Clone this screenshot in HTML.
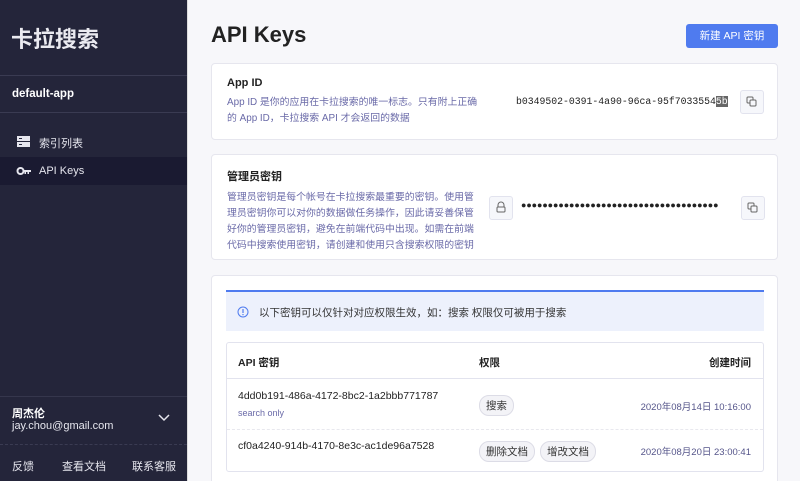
<!DOCTYPE html>
<html><head><meta charset="utf-8"><style>
*{box-sizing:border-box;margin:0;padding:0}
html,body{width:800px;height:481px;overflow:hidden}
body{font-family:"Liberation Sans","Noto Sans CJK SC",sans-serif;background:#f7f7fa;position:relative}
.sb{position:absolute;left:0;top:0;width:187px;height:481px;background:#24253a;color:#e6e6ee}
.a{position:absolute}
.card{position:absolute;background:#fff;border:1px solid #e6e6ee;border-radius:4px}
.ib{position:absolute;width:24px;height:24px;border:1px solid #e2e3ee;border-radius:3px;background:#f6f7fb}
.desc{color:#6a6aa8;font-size:9.9px;line-height:16px;white-space:nowrap}
.tag{display:inline-block;border:1px solid #dcdce6;background:#f3f3f7;border-radius:10px;font-size:10.5px;padding:2px 6px;color:#333;margin-right:5px}
</style></head><body>
<div class="sb">
 <div class="a" style="left:11px;top:22px;font-size:22px;font-weight:bold;color:#eaeaf0">卡拉搜索</div>
 <div class="a" style="left:0;top:75px;width:187px;border-top:1px solid #3a3b52"></div>
 <div class="a" style="left:12px;top:88px;font-size:11.5px;font-weight:bold;color:#fff">default-app</div>
 <div class="a" style="left:0;top:112px;width:187px;border-top:1px solid #3a3b52"></div>
 <svg class="a" style="left:17px;top:136px" width="13" height="11"><rect x="0" y="0" width="13" height="5" fill="#e6e6ee"/><rect x="0" y="6" width="13" height="5" fill="#e6e6ee"/><rect x="2" y="2" width="3" height="1" fill="#24253a"/><rect x="2" y="8" width="3" height="1" fill="#24253a"/></svg>
 <div class="a" style="left:39px;top:135px;font-size:11px">索引列表</div>
 <div class="a" style="left:0;top:157px;width:187px;height:28px;background:#1a1a31"></div>
 <svg class="a" style="left:16px;top:166px" width="16" height="10"><circle cx="4.5" cy="5" r="3" fill="none" stroke="#e6e6ee" stroke-width="2"/><path d="M7 4h8v2h-2v2h-1.5V6H10v2H8.5V6H7z" fill="#e6e6ee"/></svg>
 <div class="a" style="left:39px;top:165px;font-size:11px">API Keys</div>
 <div class="a" style="left:0;top:396px;width:187px;border-top:1px solid #35364c"></div>
 <div class="a" style="left:12px;top:405px;font-size:11px;font-weight:bold;color:#fff">周杰伦</div>
 <div class="a" style="left:12px;top:420px;font-size:11px">jay.chou@gmail.com</div>
 <svg class="a" style="left:158px;top:414px" width="12" height="8"><path d="M1 1l5 5 5-5" fill="none" stroke="#e6e6ee" stroke-width="1.5"/></svg>
 <div class="a" style="left:0;top:444px;width:187px;border-top:1px dashed #3a3b52"></div>
 <div class="a" style="left:12px;top:458px;font-size:11px">反馈</div>
 <div class="a" style="left:62px;top:458px;font-size:11px">查看文档</div>
 <div class="a" style="left:132px;top:458px;font-size:11px">联系客服</div>
</div>
<div class="a" style="left:187px;top:0;width:1px;height:481px;background:#ddd"></div>
<div class="a" style="left:211px;top:22px;font-size:22px;font-weight:bold;color:#222">API Keys</div>
<div class="a" style="left:686px;top:24px;width:92px;height:24px;background:#4f7bef;border-radius:3px;color:#fff;font-size:10.5px;line-height:24px;text-align:center">新建 API 密钥</div>

<div class="card" style="left:211px;top:63px;width:567px;height:77px">
 <div class="a" style="left:15px;top:13px;font-size:11px;font-weight:bold;color:#222">App ID</div>
 <div class="a desc" style="left:15px;top:31px">App ID 是你的应用在卡拉搜索的唯一标志。只有附上正确<br>的 App ID，卡拉搜索 API 才会返回的数据</div>
 <div class="a" style="left:304px;top:32px;font-family:'Liberation Mono',monospace;font-size:9.8px;color:#222">b0349502-0391-4a90-96ca-95f7033554<span style="background:#666;color:#fff">5b</span></div>
 <div class="ib" style="left:528px;top:26px"><svg width="22" height="22"><rect x="6" y="6" width="6" height="6" rx="1" fill="none" stroke="#666" /><rect x="9" y="9" width="6" height="6" rx="1" fill="#f6f7fb" stroke="#666"/></svg></div>
</div>

<div class="card" style="left:211px;top:154px;width:567px;height:106px">
 <div class="a" style="left:15px;top:13px;font-size:11px;font-weight:bold;color:#222">管理员密钥</div>
 <div class="a desc" style="left:15px;top:35px">管理员密钥是每个帐号在卡拉搜索最重要的密钥。使用管<br>理员密钥你可以对你的数据做任务操作，因此请妥善保管<br>好你的管理员密钥，避免在前端代码中出现。如需在前端<br>代码中搜索使用密钥，请创建和使用只含搜索权限的密钥</div>
 <div class="ib" style="left:277px;top:41px"><svg width="22" height="22"><path d="M8 10V8a3 3 0 0 1 6 0v2" fill="none" stroke="#666"/><rect x="7" y="10" width="8" height="5" rx="1" fill="none" stroke="#666"/></svg></div>
 <div class="a" style="left:309px;top:45px;font-size:9px;letter-spacing:-0.1px;color:#222">●●●●●●●●●●●●●●●●●●●●●●●●●●●●●●●●●●●●●</div>
 <div class="ib" style="left:529px;top:41px"><svg width="22" height="22"><rect x="6" y="6" width="6" height="6" rx="1" fill="none" stroke="#666" /><rect x="9" y="9" width="6" height="6" rx="1" fill="#f6f7fb" stroke="#666"/></svg></div>
</div>

<div class="card" style="left:211px;top:275px;width:567px;height:220px">
 <div class="a" style="left:14px;top:14px;width:538px;height:41px;background:#edf1fc;border-top:2px solid #4f7bef"></div>
 <svg class="a" style="left:25px;top:30px" width="12" height="12"><circle cx="6" cy="6" r="5" fill="none" stroke="#4f7bef"/><rect x="5.4" y="3" width="1.2" height="4" fill="#4f7bef"/><rect x="5.4" y="8" width="1.2" height="1.2" fill="#4f7bef"/></svg>
 <div class="a" style="left:47px;top:29px;font-size:10.5px;color:#333">以下密钥可以仅针对对应权限生效，如：搜索 权限仅可被用于搜索</div>
 <div class="a" style="left:14px;top:66px;width:538px;height:130px;border:1px solid #e2e3ee;border-radius:3px">
  <div class="a" style="left:11px;top:12px;font-size:10.5px;font-weight:bold;color:#222">API 密钥</div>
  <div class="a" style="left:252px;top:12px;font-size:10.5px;font-weight:bold;color:#222">权限</div>
  <div class="a" style="right:12px;top:12px;font-size:10.5px;font-weight:bold;color:#222">创建时间</div>
  <div class="a" style="left:0;top:35px;width:536px;border-top:1px solid #e2e3ee"></div>
  <div class="a" style="left:11px;top:47px;font-size:10.5px;color:#222">4dd0b191-486a-4172-8bc2-1a2bbb771787</div>
  <div class="a" style="left:11px;top:65px;font-size:9px;color:#6a6aa8">search only</div>
  <div class="a" style="left:252px;top:52px"><span class="tag">搜索</span></div>
  <div class="a" style="right:12px;top:56px;font-size:9.5px;color:#55558a">2020年08月14日 10:16:00</div>
  <div class="a" style="left:0;top:86px;width:536px;border-top:1px dashed #e8e8ee"></div>
  <div class="a" style="left:11px;top:97px;font-size:10.5px;color:#222">cf0a4240-914b-4170-8e3c-ac1de96a7528</div>
  <div class="a" style="left:252px;top:98px"><span class="tag">删除文档</span><span class="tag">增改文档</span></div>
  <div class="a" style="right:12px;top:101px;font-size:9.5px;color:#55558a">2020年08月20日 23:00:41</div>
 </div>
</div>
</body></html>
